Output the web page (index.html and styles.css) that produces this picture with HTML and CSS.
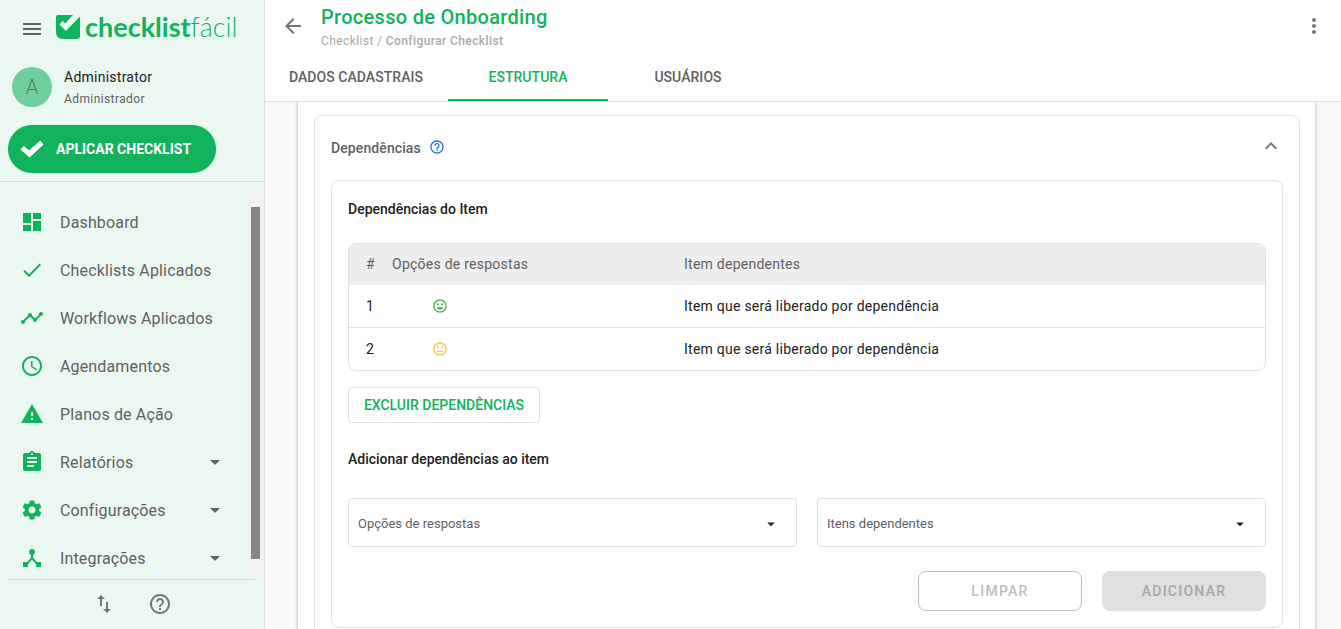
FILE: index.html
```html
<!DOCTYPE html>
<html lang="pt-BR">
<head>
<meta charset="utf-8">
<title>Processo de Onboarding</title>
<link rel="stylesheet" href="styles.css">
</head>
<body>
<div class="app">
  <aside class="sidebar">
    <div class="brand">
      <svg class="hamburger" viewBox="0 0 24 24"><path d="M3 18h18v-2H3v2zm0-5h18v-2H3v2zm0-7v2h18V6H3z"/></svg>
      <svg class="logo-mark" viewBox="0 0 24 24"><path d="M0 2Q0 0 2 0H17L15 2 9.500 8.500 6.500 6 3.500 9.500 9.800 16 24 1.500V21Q24 24 21 24H7Q0 24 0 17z"/></svg>
      <span class="logo-text"><b>checklist</b><i>fácil</i></span>
    </div>
    <div class="user">
      <div class="avatar">A</div>
      <div class="user-info">
        <div class="user-name">Administrator</div>
        <div class="user-role">Administrador</div>
      </div>
    </div>
    <button class="apply">
      <svg viewBox="0 0 24 18"><path d="M1 9.500 3.800 6.500 9 11 20.200 1 23 4.500 9.500 17z"/></svg>
      APLICAR CHECKLIST
    </button>
    <div class="menu-wrap">
      <nav class="menu">
        <a class="item"><svg viewBox="0 0 24 24"><path d="M3 13h8V3H3v10zm0 8h8v-6H3v6zm10 0h8V11h-8v10zm0-18v6h8V3h-8z"/></svg><span>Dashboard</span></a>
        <a class="item"><svg viewBox="0 0 24 24"><path d="M9 16.170L4.830 12l-1.420 1.410L9 19 21 7l-1.410-1.410z"/></svg><span>Checklists Aplicados</span></a>
        <a class="item"><svg viewBox="0 0 24 24"><path d="M23 8c0 1.100-.9 2-2 2-.18 0-.35-.02-.51-.07l-3.560 3.550c.05.16.07.34.07.52 0 1.100-.9 2-2 2s-2-.9-2-2c0-.18.02-.36.07-.52l-2.550-2.550c-.16.05-.34.07-.52.07s-.36-.02-.52-.07l-4.550 4.560c.05.16.07.33.07.51 0 1.100-.9 2-2 2s-2-.9-2-2 .9-2 2-2c.18 0 .35.02.51.07l4.560-4.550C8.020 9.360 8 9.180 8 9c0-1.100.9-2 2-2s2 .9 2 2c0 .18-.02.36-.07.52l2.550 2.550c.16-.05.34-.07.52-.07s.36.02.52.07l3.550-3.560C19.020 8.350 19 8.180 19 8c0-1.100.9-2 2-2s2 .9 2 2z"/></svg><span>Workflows Aplicados</span></a>
        <a class="item"><svg viewBox="0 0 24 24"><path d="M11.990 2C6.470 2 2 6.480 2 12s4.470 10 9.990 10C17.520 22 22 17.520 22 12S17.520 2 11.990 2zM12 20c-4.420 0-8-3.580-8-8s3.580-8 8-8 8 3.580 8 8-3.580 8-8 8zm.5-13H11v6l5.250 3.150.75-1.230-4.500-2.670z"/></svg><span>Agendamentos</span></a>
        <a class="item"><svg viewBox="0 0 24 24"><path d="M1 21h22L12 2 1 21zm12-3h-2v-2h2v2zm0-4h-2v-4h2v4z"/></svg><span>Planos de Ação</span></a>
        <a class="item"><svg viewBox="0 0 24 24"><path d="M19 3h-4.180C14.400 1.840 13.300 1 12 1c-1.300 0-2.400.84-2.820 2H5c-1.100 0-2 .9-2 2v14c0 1.100.9 2 2 2h14c1.100 0 2-.9 2-2V5c0-1.100-.9-2-2-2zm-7 0c.55 0 1 .45 1 1s-.45 1-1 1-1-.45-1-1 .45-1 1-1zm2 14H7v-2h7v2zm3-4H7v-2h10v2zm0-4H7V7h10v2z"/></svg><span>Relatórios</span><svg class="caret" viewBox="0 0 24 24"><path d="M7 10l5 5 5-5z"/></svg></a>
        <a class="item"><svg viewBox="0 0 24 24"><path d="M19.140 12.940c.04-.3.06-.61.06-.94 0-.32-.02-.64-.07-.94l2.030-1.580c.18-.14.23-.41.12-.61l-1.920-3.320c-.12-.22-.37-.29-.59-.22l-2.390.96c-.5-.38-1.030-.7-1.620-.94l-.36-2.540c-.04-.24-.24-.41-.48-.41h-3.840c-.24 0-.43.17-.47.41l-.36 2.540c-.59.24-1.130.57-1.620.94l-2.390-.96c-.22-.08-.47 0-.59.22L2.740 8.870c-.12.21-.08.47.12.61l2.030 1.580c-.05.3-.09.63-.09.94s.02.64.07.94l-2.030 1.580c-.18.14-.23.41-.12.61l1.920 3.320c.12.22.37.29.59.22l2.390-.96c.5.38 1.030.7 1.620.94l.36 2.540c.05.24.24.41.48.41h3.840c.24 0 .44-.17.47-.41l.36-2.540c.59-.24 1.130-.56 1.620-.94l2.390.96c.22.08.47 0 .59-.22l1.920-3.320c.12-.22.07-.47-.12-.61l-2.010-1.580zM12 15.600c-1.980 0-3.600-1.620-3.600-3.600s1.620-3.600 3.600-3.600 3.600 1.620 3.600 3.600-1.620 3.600-3.600 3.600z"/></svg><span>Configurações</span><svg class="caret" viewBox="0 0 24 24"><path d="M7 10l5 5 5-5z"/></svg></a>
        <a class="item"><svg viewBox="0 0 24 24"><path d="M17 16l-4-4V8.820C14.160 8.400 15 7.300 15 6c0-1.660-1.340-3-3-3S9 4.340 9 6c0 1.300.84 2.400 2 2.820V12l-4 4H3v5h5v-3.050l4-4.200 4 4.200V21h5v-5h-4z"/></svg><span>Integrações</span><svg class="caret" viewBox="0 0 24 24"><path d="M7 10l5 5 5-5z"/></svg></a>
      </nav>
      <div class="track"><div class="thumb"></div></div>
    </div>
    <div class="side-foot">
      <svg viewBox="0 0 24 24"><path d="M16 17.010V10h-2v7.010h-3L15 21l4-3.990h-3zM9 3L5 6.990h3V14h2V6.990h3L9 3z"/></svg>
      <svg viewBox="0 0 24 24"><path d="M11 18h2v-2h-2v2zm1-16C6.480 2 2 6.480 2 12s4.480 10 10 10 10-4.480 10-10S17.520 2 12 2zm0 18c-4.410 0-8-3.590-8-8s3.590-8 8-8 8 3.590 8 8-3.590 8-8 8zm0-14c-2.210 0-4 1.790-4 4h2c0-1.100.9-2 2-2s2 .9 2 2c0 2-3 1.750-3 5h2c0-2.250 3-2.500 3-5 0-2.210-1.790-4-4-4z"/></svg>
    </div>
  </aside>

  <main class="main">
    <header class="header">
      <div class="head-top">
        <svg class="back" viewBox="0 0 24 24"><path d="M20 11H7.830l5.590-5.590L12 4l-8 8 8 8 1.410-1.410L7.830 13H20v-2z"/></svg>
        <div class="titles">
          <h1>Processo de Onboarding</h1>
          <div class="crumb">Checklist / <strong>Configurar Checklist</strong></div>
        </div>
        <svg class="more" viewBox="0 0 24 24"><path d="M12 8c1.100 0 2-.9 2-2s-.9-2-2-2-2 .9-2 2 .9 2 2 2zm0 2c-1.100 0-2 .9-2 2s.9 2 2 2 2-.9 2-2-.9-2-2-2zm0 6c-1.100 0-2 .9-2 2s.9 2 2 2 2-.9 2-2-.9-2-2-2z"/></svg>
      </div>
      <div class="tabs">
        <div class="tab">DADOS CADASTRAIS</div>
        <div class="tab active">ESTRUTURA</div>
        <div class="tab">USUÁRIOS</div>
      </div>
    </header>

    <div class="content">
      <section class="sheet">
        <div class="panel">
          <div class="panel-head">
            <span class="panel-title">Dependências</span>
            <svg class="info" viewBox="0 0 24 24"><path d="M11 18h2v-2h-2v2zm1-16C6.480 2 2 6.480 2 12s4.480 10 10 10 10-4.480 10-10S17.520 2 12 2zm0 18c-4.410 0-8-3.590-8-8s3.590-8 8-8 8 3.590 8 8-3.590 8-8 8zm0-14c-2.210 0-4 1.790-4 4h2c0-1.100.9-2 2-2s2 .9 2 2c0 2-3 1.750-3 5h2c0-2.250 3-2.500 3-5 0-2.210-1.790-4-4-4z"/></svg>
            <svg class="chev" viewBox="0 0 24 24"><path d="M12 8l-6 6 1.410 1.410L12 10.830l4.590 4.580L18 14z"/></svg>
          </div>
          <div class="inner">
            <h2 class="sub first">Dependências do Item</h2>
            <table class="deps">
              <thead>
                <tr><th class="c-num">#</th><th class="c-opt">Opções de respostas</th><th>Item dependentes</th></tr>
              </thead>
              <tbody>
                <tr>
                  <td class="c-num">1</td>
                  <td class="c-opt"><svg class="face good" viewBox="0 0 24 24"><path d="M11.990 2C6.470 2 2 6.480 2 12s4.470 10 9.990 10C17.520 22 22 17.520 22 12S17.520 2 11.990 2zM12 20c-4.420 0-8-3.580-8-8s3.580-8 8-8 8 3.580 8 8-3.580 8-8 8z"/><circle cx="15.500" cy="9.500" r="1.500"/><circle cx="8.500" cy="9.500" r="1.500"/><path d="M12 17.500c2.330 0 4.300-1.460 5.110-3.500H6.890c.8 2.040 2.780 3.500 5.110 3.500z"/></svg></td>
                  <td>Item que será liberado por dependência</td>
                </tr>
                <tr>
                  <td class="c-num">2</td>
                  <td class="c-opt"><svg class="face mid" viewBox="0 0 24 24"><path d="M11.990 2C6.470 2 2 6.480 2 12s4.470 10 9.990 10C17.520 22 22 17.520 22 12S17.520 2 11.990 2zM12 20c-4.420 0-8-3.580-8-8s3.580-8 8-8 8 3.580 8 8-3.580 8-8 8z"/><circle cx="15.500" cy="9.500" r="1.500"/><circle cx="8.500" cy="9.500" r="1.500"/><path d="M7.500 14.500h9V16.500h-9z"/></svg></td>
                  <td>Item que será liberado por dependência</td>
                </tr>
              </tbody>
            </table>
            <button class="btn-outline">EXCLUIR DEPENDÊNCIAS</button>
            <h2 class="sub second">Adicionar dependências ao item</h2>
            <div class="selects">
              <div class="select"><span>Opções de respostas</span><svg viewBox="0 0 24 24"><path d="M7 10l5 5 5-5z"/></svg></div>
              <div class="select"><span>Itens dependentes</span><svg viewBox="0 0 24 24"><path d="M7 10l5 5 5-5z"/></svg></div>
            </div>
            <div class="actions">
              <button class="btn-clear">LIMPAR</button>
              <button class="btn-add">ADICIONAR</button>
            </div>
          </div>
        </div>
      </section>
    </div>
  </main>
</div>
</body>
</html>
```
FILE: styles.css
```css
* { box-sizing: border-box; }
html, body { margin: 0; height: 100%; overflow: hidden; }
body { font-family: Roboto, "Liberation Sans", sans-serif; color: #212121; background: #fafafa; }
h1, h2 { margin: 0; }
button { font-family: inherit; cursor: pointer; }

.app { display: flex; height: 629px; }

/* Sidebar */
.sidebar { width: 265px; flex: none; display: flex; flex-direction: column; background: #ebf8f2; border-right: 1px solid #e0e0e0; }
.brand { height: 55px; display: flex; align-items: center; padding: 0 0 0 20px; flex: none; }
.hamburger { width: 24px; height: 24px; fill: #5f6360; margin-top: 3px; }
.logo-mark { width: 24px; height: 24px; margin-left: 12px; margin-bottom: 1px; fill: #10b35c; }
.logo-text { margin-left: 5px; margin-top: -1px; font-family: Lato, Roboto, sans-serif; font-size: 27px; line-height: 28px; color: #10b35c; }
.logo-text b { font-weight: 700; }
.logo-text i { font-style: normal; font-weight: 300; }

.user { display: flex; align-items: center; padding: 8px 0 0 12px; height: 56px; flex: none; }
.avatar { width: 40px; height: 40px; border-radius: 50%; background: #6ecf9c; color: #56796a; font-size: 20px; font-weight: 300; display: flex; align-items: center; justify-content: center; }
.user-info { margin-left: 12px; }
.user-name { font-size: 14px; line-height: 20px; letter-spacing: .25px; color: #212121; }
.user-role { font-size: 12px; line-height: 16px; margin-top: 4px; letter-spacing: .4px; color: #616161; }

.apply { margin: 14px 0 8px 8px; width: 208px; height: 48px; border: 0; border-radius: 24px; background: #10b35c; color: #fff; font-size: 14px; font-weight: 700; display: flex; align-items: center; padding: 0 0 0 12px; flex: none; box-shadow: 0 0 1px rgba(0,0,0,.15); }
.apply svg { width: 24px; height: 18px; fill: #fff; stroke: #fff; stroke-width: 1; stroke-linejoin: round; margin-right: 12px; }

.menu-wrap { flex: 1; min-height: 0; display: flex; border-top: 1px solid #d5e0da; padding-top: 8px; }
.menu { flex: 1; padding-top: 8px; overflow: hidden; }
.item { display: flex; align-items: center; height: 48px; padding: 0 20px; color: #616161; font-size: 16px; letter-spacing: .15px; }
.item svg { width: 24px; height: 24px; fill: #10b35c; margin-right: 16px; flex: none; }
.item span { flex: 1; }
.item .caret { fill: #616161; margin: 0; }
.track { width: 17px; background: #f1f1f1; padding: 17px 4px 20px; flex: none; }
.thumb { height: 100%; width: 9px; background: #858585; }

.side-foot { height: 50px; flex: none; margin: 0 8px; border-top: 1px solid #d5e0da; display: flex; align-items: center; justify-content: center; gap: 32px; padding-bottom: 1px; }
.side-foot svg { width: 24px; height: 24px; fill: #757575; }

/* Main */
.main { flex: 1; min-width: 0; display: flex; flex-direction: column; }
.header { height: 102px; flex: none; background: #fff; border-bottom: 1px solid #e0e0e0; }
.head-top { height: 53px; display: flex; align-items: flex-start; padding: 14px 15px 0 16px; }
.back { width: 24px; height: 24px; fill: #757575; margin: 0 16px 0 0; flex: none; }
.titles { flex: 1; margin-top: -11px; }
h1 { font-size: 20px; font-weight: 500; line-height: 28px; letter-spacing: .3px; color: #10b35c; }
.crumb { font-size: 12px; line-height: 16px; margin-top: 2px; letter-spacing: .4px; color: #a8a8a8; }
.crumb strong { font-weight: 500; }
.more { width: 24px; height: 24px; fill: #757575; flex: none; }
.tabs { display: flex; padding-left: 11px; gap: 12px; height: 48px; }
.tab { width: 160px; height: 48px; display: flex; align-items: center; justify-content: center; font-size: 14px; font-weight: 500; letter-spacing: .05px; color: #616161; }
.tabs .tab:last-child { margin-left: -12px; }
.tab.active { color: #10b35c; border-bottom: 2px solid #10b35c; padding-top: 2px; }

.content { flex: 1; min-height: 0; overflow: hidden; padding: 0 25px 0 32px; }
.sheet { background: #fff; border: solid #d9d9d9; border-width: 0 1px; box-shadow: 0 0 3px rgba(0,0,0,.2); padding: 13px 15px 0 16px; min-height: 100%; }
.panel { border: 1px solid #e0e0e0; border-radius: 8px; padding: 0 16px 16px; }
.panel-head { height: 64px; display: flex; align-items: center; padding-bottom: 1px; }
.panel-title { font-size: 14px; font-weight: 500; letter-spacing: .1px; color: #616161; }
.info { width: 16px; height: 16px; fill: #2a72e5; margin: -2px 0 0 8px; }
.chev { width: 24px; height: 24px; fill: #757575; margin-left: auto; margin-right: 0; margin-top: -4px; }

.inner { border: 1px solid #e0e0e0; border-radius: 8px; padding: 0 16px 16px; }
.sub { font-size: 14px; font-weight: 500; line-height: 20px; color: #212121; }
.sub.first { margin: 18px 0 24px; }
.sub.second { margin: 26px 0 29px; }

.deps { width: 100%; border-collapse: separate; border-spacing: 0; table-layout: fixed; font-size: 14px; letter-spacing: .25px; border: 1px solid #e0e0e0; border-radius: 8px; overflow: hidden; }
.deps th { height: 41px; background: #eee; font-weight: 400; color: #616161; text-align: left; padding: 0 0 2px; }
.deps td { height: 43px; padding: 0; border-top: 1px solid #e0e0e0; vertical-align: middle; }
.deps tbody tr:first-child td { border-top: 0; height: 42px; }
.c-num { width: 43px; padding-left: 17px !important; }
.c-opt { width: 292px; }
.deps td.c-opt { padding-left: 40px; }
.face { width: 16px; height: 16px; display: block; }
.face.good { fill: #4caf50; }
.face.mid { fill: #fbc02d; }

.btn-outline { display: block; margin-top: 16px; width: 192px; height: 36px; background: #fff; border: 1px solid #e0e0e0; border-radius: 4px; color: #10b35c; font-size: 14px; font-weight: 500; padding: 0; }

.selects { display: flex; gap: 20px; }
.select { flex: 1; height: 49px; border: 1px solid #e0e0e0; border-radius: 4px; display: flex; align-items: center; padding: 2px 16px 0 9px; font-size: 13px; color: #616161; }
.select span { flex: 1; }
.select svg { width: 18px; height: 18px; fill: #212121; }

.actions { display: flex; justify-content: flex-end; gap: 20px; margin-top: 24px; }
.actions button { width: 164px; height: 40px; border-radius: 8px; font-size: 14px; font-weight: 500; letter-spacing: 1.25px; padding: 0; }
.btn-clear { background: #fff; border: 1px solid #bdbdbd; color: #bdbdbd; }
.btn-add { background: #e0e0e0; border: 0; color: #a6a6a6; }
```
